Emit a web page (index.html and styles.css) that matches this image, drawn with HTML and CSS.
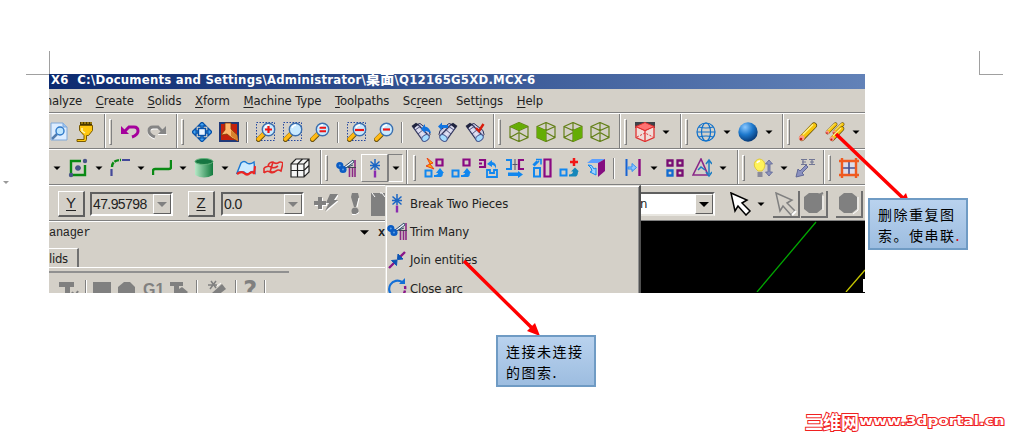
FILE: index.html
```html
<!DOCTYPE html>
<html lang="zh">
<head>
  <meta charset="UTF-8" />
  <title>Mastercam X6</title>
  <link rel="stylesheet" href="styles.css">
</head>
<body>
  <!-- shared icon shapes -->
  <svg class="defs" width="0" height="0">
    <defs>
      <linearGradient id="steel" x1="0" y1="1" x2="1" y2="0"><stop offset="0" stop-color="#5d5f8c"/><stop offset=".5" stop-color="#e4e4f6"/><stop offset="1" stop-color="#6d7099"/></linearGradient>
      <linearGradient id="green" x1="0" x2="1"><stop offset="0" stop-color="#b5e8c6"/><stop offset="1" stop-color="#117a3d"/></linearGradient>
      <radialGradient id="ball" cx=".35" cy=".25" r=".8"><stop offset="0" stop-color="#8cc8ff"/><stop offset=".5" stop-color="#1d78cc"/><stop offset="1" stop-color="#06346f"/></radialGradient>
      <symbol id="lens" viewBox="0 0 20 20">
        <path d="M2.500 17.500l5-5" stroke="#6b5310" stroke-width="5" stroke-linecap="round"/>
        <path d="M2.500 17l5-5" stroke="#ffb914" stroke-width="3.800" stroke-linecap="round"/>
        <circle cx="12.500" cy="7.500" r="6.200" fill="#c9eaff" stroke="#3c6fae" stroke-width="1.400"/>
        <path d="M9 6q1-3 4-3" stroke="#fff" stroke-width="1.500" fill="none"/>
      </symbol>
      <symbol id="dots" viewBox="0 0 20 20"><rect x=".5" y=".5" width="18" height="18" fill="none" stroke="#2548a0" stroke-dasharray="1.500 1.500"/></symbol>
      <symbol id="cube" viewBox="0 0 20 20"><path d="M1 4.500l9-4 9 4v11l-9 4-9-4zM1 4.500l9 4 9-4M10 .5v19M1 15.500l9-5 9 5" fill="none" stroke="currentColor" stroke-width="1.200"/></symbol>
      <symbol id="scope" viewBox="0 0 20 20">
        <path d="M6 2.500l3-1 9 7 1 4-3 3z" fill="url(#steel)" stroke="#30345c"/>
        <path d="M2 5l5-2.500 11 11.500q-1 5-6 5z" fill="url(#steel)" stroke="#30345c" stroke-width="1.200"/>
        <path d="M4 8l6-4M7 12l6-5" stroke="#50547c"/>
        <path d="M.5 4L5 .8l2.500 1.700L3 6.500z" fill="#20243f"/>
        <ellipse cx="14.500" cy="16" rx="4" ry="2.800" transform="rotate(-35 14.500 16)" fill="#a5dcff" stroke="#4a5b94"/>
      </symbol>
      <symbol id="drop" viewBox="0 0 8 20"><path d="M.500 8.500h7L4 12z" fill="#000"/></symbol>
      <symbol id="burst" viewBox="0 0 20 20"><path d="M10 1v11M5.500 3.500l9 8M14.500 3.500l-9 8M5 7.500h10" stroke="#1b66c4" stroke-width="1.500"/><path d="M10 12.500v7" stroke="#8a2bb0" stroke-width="2.400"/></symbol>
      <symbol id="trim" viewBox="0 0 20 20"><path d="M8 9l9-7 1 2-8 6zM9 10l8-3" fill="#eef4ff" stroke="#35506e" stroke-width="1"/><circle cx="3.800" cy="7.500" r="2.300" fill="#5c9de0" stroke="#0b5cc4" stroke-width="2.600"/><circle cx="7" cy="11.500" r="2.300" fill="#5c9de0" stroke="#0b5cc4" stroke-width="2.600"/><path d="M13.500 10v9M16.500 10v9M19 2v17" stroke="#8b2a86" stroke-width="1.600"/><path d="M12 9.500h8" stroke="#445" /></symbol>
      <symbol id="pencil" viewBox="0 0 20 20"><path d="M4 16L16 3.500" stroke="#5f4a08" stroke-width="6" stroke-linecap="round"/><path d="M4 15.500L16 3.500" stroke="#f6c40d" stroke-width="4.600" stroke-linecap="round"/><path d="M5 12.500L15 2.500" stroke="#fff08a" stroke-width="1.500"/><circle cx="3.700" cy="16" r="2.800" fill="#ff9a87"/><circle cx="3" cy="17" r="1.300" fill="#c21818"/></symbol>
    </defs>
  </svg>

  <div class="page">
    <i class="crop crop-left"></i>
    <i class="crop crop-right"></i>
    <i class="margin-mark"></i>

    <div class="app">
      <div class="titlebar">X6&nbsp; C:\Documents and Settings\Administrator\<b class="cjk">桌面</b>\Q12165G5XD.MCX-6</div>
      <div class="menubar">
        <span class="cut">nalyze</span><span><u>C</u>reate</span><span><u>S</u>olids</span><span><u>X</u>form</span><span><u>M</u>achine Type</span><span><u>T</u>oolpaths</span><span>Sc<u>r</u>een</span><span>Sett<u>i</u>ngs</span><span><u>H</u>elp</span>
      </div>

      <div class="toolbar">
        <div class="group first-a">
          <svg class="ico" viewBox="0 0 20 20"><path d="M2 1h12l4 4v13H2z" fill="#dcecff" stroke="#7fa7d8"/><path d="M14 1v4h4" fill="#9cc5f2" stroke="#7fa7d8"/><path d="M3 17l5-5" stroke="#527cae" stroke-width="2.500"/><circle cx="11" cy="9" r="4" fill="#bfe6ff" stroke="#2e78c8" stroke-width="1.400"/></svg>
          <svg class="ico" viewBox="0 0 20 20"><path d="M4 0h12v3H4z" fill="#4a3900"/><path d="M6 0v2M9 0v2M12 0v2M15 0v2" stroke="#ffce20" stroke-width=".8"/><path d="M3.500 3.500h13v5l-4 5h-2v4l-1 2H1v-2h7v-4l-4.500-5z" fill="#ffc810" stroke="#7a5a00"/><path d="M6 6v3l3 2" stroke="#fff6b0" stroke-width="1.500" fill="none"/></svg>
        </div>
        <div class="group"><i class="grip"></i>
          <svg class="ico" viewBox="0 0 20 20"><path d="M5 9l4-4h5q4 0 4 4t-6 6" fill="none" stroke="#a5009c" stroke-width="3"/><path d="M1 4v8h8z" fill="#a5009c"/></svg>
          <svg class="ico" viewBox="0 0 20 20"><path d="M16 10l-4-4H7Q2 6 2 10t6 6" fill="none" stroke="#fff" stroke-width="3"/><path d="M15 9l-4-4H6Q2 5 2 9t6 6" fill="none" stroke="#858585" stroke-width="3"/><path d="M19 4v8h-8z" fill="#858585"/><path d="M20 12.500h-9" stroke="#fff"/></svg>
        </div>
        <div class="group close"><i class="grip"></i>
          <svg class="ico" viewBox="0 0 20 20"><path d="M10 0l4 4h-3v3h-2V4H6zM10 20l4-4h-3v-3h-2v3H6zM0 10l4-4v3h3v2H4v3zM20 10l-4-4v3h-3v2h3v3z" fill="#43a5f5" stroke="#0751a8" stroke-width="1.300"/><rect x="6.500" y="6.500" width="7" height="7" fill="#e9f4ff" stroke="#0751a8" stroke-width="1.400"/></svg>
          <svg class="ico" viewBox="0 0 20 20"><rect x="1" y="1" width="18" height="18" fill="#c4200c" stroke="#203979" stroke-width="2"/><path d="M6 1h6v6l6 6 1 6-6-3-5-4-6 1 4-5z" fill="#ffb870" stroke="#8a3b00" stroke-width=".8"/><path d="M12 8l6 5 1 6-7-5z" fill="#d8812d"/></svg>
          <i class="sep"></i>
          <svg class="ico" viewBox="0 0 20 20"><use href="#dots"/><use href="#lens"/><path d="M9 7.500h7M12.500 4v7" stroke="#f01414" stroke-width="2.200"/></svg>
          <svg class="ico" viewBox="0 0 20 20"><use href="#dots"/><use href="#lens"/></svg>
          <svg class="ico" viewBox="0 0 20 20"><use href="#lens"/><path d="M9.500 5.800h6.500M9.500 9.200h6.500" stroke="#f01414" stroke-width="1.900"/></svg>
          <i class="sep"></i>
          <svg class="ico" viewBox="0 0 20 20"><use href="#dots"/><use href="#lens"/><path d="M8 8h9" stroke="#f01414" stroke-width="2.200"/></svg>
          <svg class="ico" viewBox="0 0 20 20"><use href="#lens"/><path d="M9 7.500h7" stroke="#f01414" stroke-width="2.200"/></svg>
          <i class="sep"></i>
          <svg class="ico" viewBox="0 0 20 20"><use href="#scope"/><path d="M10 7l4-5v2.500q5 1 6 7-3-3-6-2.500V11z" fill="#1274e0"/></svg>
          <svg class="ico" viewBox="0 0 20 20"><g transform="matrix(-1 0 0 1 20 0)"><use href="#scope"/></g><path d="M0 4.500l4-4v2.500h6v3H4v2.500z" fill="#1274e0"/></svg>
          <svg class="ico" viewBox="0 0 20 20"><use href="#scope"/><path d="M11 6l3 3 4.500-7" stroke="#d91c0b" stroke-width="2.400" fill="none"/></svg>
        </div>
        <div class="group olive"><i class="grip"></i>
          <svg class="ico" viewBox="0 0 20 20"><use href="#cube"/><path d="M1.500 4.500l8.500-4 8.500 4-8.500 4z" fill="#65ad05"/></svg>
          <svg class="ico" viewBox="0 0 20 20"><use href="#cube"/><path d="M1 4.500l9 4v11l-9-4z" fill="#65ad05"/></svg>
          <svg class="ico" viewBox="0 0 20 20"><use href="#cube"/><path d="M10 8.500l9-4v11l-9 4z" fill="#65ad05"/></svg>
          <svg class="ico" viewBox="0 0 20 20"><use href="#cube"/></svg>
        </div>
        <div class="group wide-end"><i class="grip"></i>
          <svg class="ico" viewBox="0 0 20 20"><path d="M0 0h20v6H0z" fill="#3e4148"/><path d="M1 4.500l9 4 9-4v11l-9 4-9-4z" fill="#f0dcd8" stroke="#e03030" stroke-width="1.300"/><path d="M1 4.500l9-4 9 4-9 4z" fill="#ff7272" stroke="#e03030"/><path d="M10 8.500v11" stroke="#e03030" stroke-width="1.300"/><path d="M2 15l8-4 8 4" fill="none" stroke="#e03030" stroke-dasharray="2 1.500"/></svg>
          <svg class="drop"><use href="#drop"/></svg>
        </div>
        <div class="group"><i class="grip"></i>
          <svg class="ico" viewBox="0 0 20 20"><g fill="none" stroke="#0e70cb" stroke-width="1.200"><circle cx="10" cy="10" r="9"/><ellipse cx="10" cy="10" rx="4.500" ry="9"/><path d="M1 10h18M3 5q7 2 14 0M3 15q7-2 14 0"/></g></svg>
          <svg class="drop"><use href="#drop"/></svg>
          <svg class="ico" viewBox="0 0 20 20"><circle cx="10" cy="10" r="9.700" fill="url(#ball)"/></svg>
          <svg class="drop"><use href="#drop"/></svg>
        </div>
        <div class="group last"><i class="grip"></i>
          <svg class="ico" viewBox="0 0 20 20"><use href="#pencil"/></svg>
          <svg class="ico" viewBox="0 0 20 20"><use href="#pencil" x="0" y="0" width="13" height="13"/><use href="#pencil" x="7" y="0" width="13" height="13"/><use href="#pencil" x="4" y="4" width="16" height="16"/></svg>
          <svg class="drop"><use href="#drop"/></svg>
        </div>
      </div>

      <div class="toolbar">
        <div class="group first-b">
          <svg class="drop"><use href="#drop"/></svg>
          <svg class="ico" viewBox="0 0 20 20"><path d="M13 3H3v14h14V7" fill="none" stroke="#0a8a14" stroke-width="2.400"/><path d="M7 10h6" stroke="#345"/><g fill="#495488"><circle cx="17" cy="3" r="2.200"/><circle cx="10" cy="10" r="2.700"/><circle cx="3" cy="17" r="2.200"/></g></svg>
          <svg class="drop"><use href="#drop"/></svg>
          <svg class="ico" viewBox="0 0 20 20"><path d="M2 9q0-7 9-7" fill="none" stroke="#0a8a14" stroke-width="2.400" stroke-dasharray="5 1"/><path d="M1.500 11v7M12 2h8" stroke="#44499a" stroke-width="2.200"/></svg>
          <svg class="drop"><use href="#drop"/></svg>
          <svg class="ico" viewBox="0 0 20 20"><path d="M1 17v-4q0-2 2-2h14q2 0 2-2V2" fill="none" stroke="#0a8a14" stroke-width="2.400"/></svg>
          <svg class="drop"><use href="#drop"/></svg>
          <svg class="ico" viewBox="0 0 20 20"><path d="M1 3v14q9 5 18 0V3z" fill="url(#green)"/><ellipse cx="10" cy="3.500" rx="9" ry="3" fill="#167642" stroke="#65b47d"/></svg>
          <svg class="drop"><use href="#drop"/></svg>
          <svg class="ico" viewBox="0 0 20 20"><path d="M1 15L5 5q3-3 6 0 3 2 7-1l1 11q-3-3-5 0-3 2-6-1-3-1-7 1z" fill="#cceaff" stroke="#1b78d2" stroke-width="1.400"/><path d="M1 16q4-3 7-1 3 3 6 0 3-2 4 1l1-8" stroke="#ee2522" stroke-width="2.200" fill="none"/></svg>
          <svg class="ico" viewBox="0 0 20 20"><path d="M5 8q1-4 5-4 2 2 5 1 2-2 5 0l-2 8q-3-2-5 0-4 2-6 0M1 10q4-3 7-1 3 2 7-1M1 15q3-3 6-1 3 2 6-1M10 4L7 14M1 10v5" fill="none" stroke="#e42b29" stroke-width="1.600"/></svg>
          <svg class="ico" viewBox="0 0 20 20"><path d="M1 6l5-5h13v13l-5 5H1z" fill="#f5f5f5"/><path d="M1 6l5-5h13v13l-5 5H1zM1 6h13v13M14 6l5-5M7.500 19V6l5-5M1 12.500h13l5-5" fill="none" stroke="#222" stroke-width="1.200"/></svg>
        </div>
        <div class="group tight"><i class="grip"></i>
          <svg class="ico" viewBox="0 0 20 20"><use href="#trim"/></svg>
          <div class="split"><span class="split-main"><svg class="ico" viewBox="0 0 20 20"><use href="#burst"/></svg></span><span class="split-drop"><svg class="drop"><use href="#drop"/></svg></span></div>
        </div>
        <div class="group modify"><i class="grip"></i>
          <svg class="ico" viewBox="0 0 20 20"><path d="M12.500 1.500h6v6h-6z" fill="none" stroke="#8a0982" stroke-width="2.200"/><path d="M1.500 12.500h6v6h-6z" fill="none" stroke="#1187ef" stroke-width="2"/><path d="M10 19h7q2-1 2-4h1l-4-5-4 5h2q0 2-4 2z" fill="#1187ef"/><path d="M3 0l6 5-3 1 4 5-8-3 4-2z" fill="#ffb000" stroke="#ef4112"/></svg>
          <svg class="ico" viewBox="0 0 20 20"><path d="M12.500 1.500h6v6h-6z" fill="none" stroke="#8a0982" stroke-width="2.200"/><path d="M1.500 12.500h6v6h-6z" fill="none" stroke="#1187ef" stroke-width="2"/><path d="M10 19h7q2-1 2-4h1l-4-5-4 5h2q0 2-4 2z" fill="#1187ef"/></svg>
          <svg class="ico" viewBox="0 0 20 20"><path d="M1 2h6v7H1M1 5.500h3" fill="none" stroke="#8a0982" stroke-width="2.200"/><path d="M9 12h3v3h4v-3h3v7H9z" fill="none" stroke="#1187ef" stroke-width="1.800"/><path d="M9 6l5-4v2q5 1 4 7-1-4-4-4v2z" fill="#1187ef"/></svg>
          <svg class="ico" viewBox="0 0 20 20"><path d="M1 2h5v9H1" fill="none" stroke="#1187ef" stroke-width="2"/><path d="M19 2h-5v9h5" fill="none" stroke="#8a0982" stroke-width="2.200"/><path d="M10 1v11M7.500 6.500h5" stroke="#556"/><path d="M3 14.500h10v-1.500l5 3.500-5 3.500V18H3z" fill="#1187ef"/></svg>
          <svg class="ico" viewBox="0 0 20 20"><path d="M12.500 1.500h6v17h-6z" fill="none" stroke="#8a0982" stroke-width="2.200"/><path d="M2 10h6v8.500H2z" fill="none" stroke="#1187ef" stroke-width="2"/><path d="M1 7l4-4M4 1.500h5v5M2 8l5-5" fill="none" stroke="#1187ef" stroke-width="1.600"/></svg>
          <svg class="ico" viewBox="0 0 20 20"><path d="M1.500 11.500h6v6h-6z" fill="none" stroke="#1187ef" stroke-width="2"/><path d="M10 18.500h7q2-1 2-5h1l-4-4-4 4h2q0 3-4 3z" fill="#1687ba"/><path d="M11 4h8M15 0v8" stroke="#f11616" stroke-width="2.500"/></svg>
          <svg class="ico" viewBox="0 0 20 20"><path d="M1 5l5-4h13l-7 4z" fill="#5c9fff"/><path d="M12 5l7-4v12l-7 6z" fill="#850d80"/><path d="M2 7q4-1 6 4l2-1v7l-6-3 2-1q0-3-4-6z" fill="#9cd2ff" stroke="#1187ef"/></svg>
          <i class="sep"></i>
          <svg class="ico" viewBox="0 0 20 20"><path d="M3.500 1v17" stroke="#1763d2" stroke-width="2"/><path d="M16.500 1v17" stroke="#8a0982" stroke-width="2.400"/><path d="M5 9h4V5.500l4.500 4-4.500 4V11H5z" fill="#8cc4ff" stroke="#338ff2"/></svg>
          <svg class="drop"><use href="#drop"/></svg>
          <svg class="ico" viewBox="0 0 20 20"><g fill="none" stroke-width="2.300"><path d="M2.500 2.500h5v5h-5zM12.500 2.500h5v5h-5zM12.500 12.500h5v5h-5z" stroke="#780d73"/><path d="M2.500 12.500h5v5h-5z" stroke="#126bd0"/></g></svg>
          <svg class="ico" viewBox="0 0 20 20"><path d="M1 17L9 1l7 16z" fill="none" stroke="#8a2788" stroke-width="1.600"/><path d="M6 12l3-3 4 3M17 3v13M14 6l3-4 3 4M14 14l3 4 3-4" fill="none" stroke="#1b7dc4" stroke-width="1.500"/></svg>
          <svg class="drop"><use href="#drop"/></svg>
        </div>
        <div class="group close"><i class="grip"></i>
          <svg class="ico" viewBox="0 0 20 20"><path d="M5 13Q-1 8 2.500 3q4-4 8 0 3.500 5-1.500 10z" fill="#fff35a" stroke="#e0c83a"/><path d="M4.500 14h5v5h-5z" fill="#8a8a9a"/><path d="M4 5q1-2 3-2" stroke="#fff" stroke-width="1.600" fill="none"/><path d="M16 2l3.500 4H17v8h2.500L16 18l-3.500-4H15V6h-2.500z" fill="#8d93bb" stroke="#5d6598" stroke-width=".8"/></svg>
          <svg class="drop"><use href="#drop"/></svg>
          <svg class="ico" viewBox="0 0 20 20"><path d="M6 1.500h6M14 1.500h6M6 6.500h6M14 6.500h6M7 4h4M15 4h4M8 2v4M17 2v4" stroke="#717695" stroke-width="1.200" fill="none"/><path d="M11 7l-6 6-2-2-2 8 8-2-2-2 6-6z" fill="#8b91c0" stroke="#626996"/></svg>
        </div>
        <div class="group last"><i class="grip"></i>
          <svg class="ico" viewBox="0 0 20 20"><path d="M3 3h14v14H3z" fill="#dcdbe9"/><path d="M10 4v12M4 10h12" stroke="#455090" stroke-width="1.600"/><path d="M3 0v20M17 0v20M0 3h20M0 17h20" stroke="#ef5a20" stroke-width="2.400"/></svg>
        </div>
      </div>

      <div class="ribbon">
        <div class="coords">
          <span class="key"><u>Y</u></span>
          <span class="field">47.95798<i class="spin off"></i></span>
          <span class="key key-z"><u>Z</u></span>
          <span class="field field-z">0.0<i class="spin off"></i></span>
          <svg class="bolt" viewBox="0 0 24 24"><g transform="translate(1 1)" fill="#fff"><path d="M0 9h4V5h4v4h4v4H8v4H4v-4H0zM16 2h8l-4 6h4L11 19l4-8h-3z"/></g><path d="M0 9h4V5h4v4h4v4H8v4H4v-4H0zM16 2h8l-4 6h4L11 19l4-8h-3z" fill="#808080"/></svg>
          <svg class="bang" viewBox="0 0 10 24"><path d="M2 1h6l1 4-3 10H4L1 5z" fill="#808080"/><circle cx="5" cy="19" r="3.500" fill="#808080"/><path d="M9 6L7 15M2 22.500q4 1 7-2" stroke="#fff" fill="none"/></svg>
          <svg class="card" viewBox="0 0 14 24"><path d="M0 1h14v23H0z" fill="#808080"/><path d="M1 1l3 4M9 1h2l3 4" stroke="#fff" fill="none"/></svg>
        </div>
        <div class="selection">
          <span class="combo">n<i class="spin"></i></span>
          <svg class="cursor" viewBox="0 0 24 24"><path d="M2 1l16 7-5 3 8 8-4 4-8-9-3 5z" fill="#fff" stroke="#000" stroke-width="1.500"/></svg>
          <svg class="drop"><use href="#drop"/></svg>
          <span class="press"><svg viewBox="0 0 24 24"><path d="M2 1l16 7-5 3 8 8-4 4-8-9-3 5z" fill="#d4d0c8" stroke="#808080" stroke-width="1.500"/><path d="M18 23l4-4" stroke="#fff" stroke-width="2"/></svg></span>
          <span class="press"><svg viewBox="0 0 24 24"><path d="M2 5l5-4h9l4 2v14l-5 4H7l-5-4z" fill="#808080"/><path d="M15 4l6-3" stroke="#808080" stroke-width="2"/><path d="M21 4v14" stroke="#fff"/></svg></span>
          <span class="press press-last"><svg viewBox="0 0 24 24"><path d="M2 5l5-4h8l5 4v12l-5 4H7l-5-4z" fill="#808080"/><path d="M21 5v13l-5 4" stroke="#fff" fill="none"/></svg></span>
        </div>
      </div>

      <div class="workspace">
        <div class="manager">
          <div class="manager-head"><span>anager</span><svg class="head-arrow" viewBox="0 0 10 6"><path d="M0 0h10L5 5z"/></svg><b>x</b></div>
          <div class="tabs"><span class="tab">lids</span></div>
          <div class="tab-line"></div>
          <div class="manager-tools">
            <svg class="mt" viewBox="0 0 22 16"><path d="M1 2h15v5h-4v9H7V7H1z" fill="#808080"/><path d="M14 12l3 4 3-5" stroke="#808080" stroke-width="2" fill="none"/></svg>
            <i class="sep"></i>
            <i class="block"></i>
            <svg class="mt" viewBox="0 0 22 16"><path d="M2 7l6-5h6l5 5v9H2z" fill="#808080"/></svg>
            <b class="g1">G1</b>
            <svg class="mt" viewBox="0 0 22 16"><path d="M1 2h13v4h-4l0 3 3-2 6 5-4 4H5V6H1z" fill="#808080"/></svg>
            <i class="sep"></i>
            <svg class="mt mt-wide" viewBox="0 0 22 16"><path d="M2 5h9M5 1l5 7M10 1L4 9" stroke="#808080" stroke-width="1.500" fill="none"/><path d="M6 13l10-9 4 5-9 7H7z" fill="#808080"/><path d="M11 6l4-3" stroke="#fff"/></svg>
            <i class="sep"></i>
            <b class="help">?</b>
            <i class="sep"></i>
          </div>
        </div>
        <div class="viewport">
          <svg viewBox="0 0 225 71"><path d="M117 71L176 1" stroke="#00a800" stroke-width="1.300"/><path d="M206 71l19-22" stroke="#c8c800" stroke-width="1.300"/><path d="M223 58h2v13h-2z" fill="#fff"/></svg>
        </div>
      </div>

      <div class="dropdown">
        <div class="entry"><svg class="ico" viewBox="0 0 20 20"><use href="#burst"/></svg>Break Two Pieces</div>
        <div class="entry"><svg class="ico" viewBox="0 0 20 20"><use href="#trim"/></svg>Trim Many</div>
        <div class="entry"><svg class="ico" viewBox="0 0 20 20"><path d="M2 18l6-6M12 8l6-6" stroke="#8a168a" stroke-width="2.400"/><path d="M4.500 10.500l5.500-.5-.5 5.500-1.800-2zM10.500 9.500l.5-5.500 1.800 2 3.200 3z" fill="#0c54b4" stroke="#0c54b4"/></svg>Join entities</div>
        <div class="entry"><svg class="ico" viewBox="0 0 20 20"><path d="M6 18A8 8 0 1 1 15 4" fill="none" stroke="#136fd6" stroke-width="2.200"/><path d="M12 6h6V0z" fill="#136fd6"/><path d="M18 8q1 6-3 10" fill="none" stroke="#8a168a" stroke-width="2.400" stroke-dasharray="3 1.500"/></svg>Close arc</div>
      </div>
    </div>

    <svg class="pointers" viewBox="0 0 1025 435">
      <path d="M836 134l69 66M464 261l69 68" stroke="#f00" stroke-width="3.500"/>
      <path d="M540 336l-13-5 8-8zM909 202l-10-1 7-8z" fill="#f00"/>
    </svg>
    <div class="callout callout-delete">删除重复图<br>索。使串联<em>.</em></div>
    <div class="callout callout-join">连接未连接<br>的图索.</div>
    <div class="watermark"><span>三维网</span><span class="url">www.3dportal.cn</span></div>
  </div>
</body>
</html>
```

FILE: styles.css
```css
* {
  box-sizing: border-box;
}

body {
  margin: 0;
  background: #fff;
  font-family: "DejaVu Sans Condensed", "DejaVu Sans", "Noto Sans CJK SC", sans-serif;
  font-size: 13px;
  color: #222;
}

.defs {
  position: absolute;
}

.page {
  position: relative;
  width: 1025px;
  height: 435px;
  padding: 74px 0 0 49px;
  overflow: hidden;
}

/* page corner marks */
.crop {
  position: absolute;
  top: 51px;
  width: 24px;
  height: 24px;
  border-bottom: 1px solid #a0a0a0;
}

.crop-left {
  left: 26px;
  border-right: 1px solid #a0a0a0;
}

.crop-right {
  left: 979px;
  border-left: 1px solid #a0a0a0;
}

.margin-mark {
  position: absolute;
  left: 3px;
  top: 181px;
  border: 3px solid transparent;
  border-top-color: #999;
}

.app {
  position: relative;
  width: 816px;
  height: 219px;
  overflow: hidden;
  background: #d4d0c8;
}

.titlebar {
  height: 15px;
  overflow: hidden;
  background: linear-gradient(90deg, #0c2a70, #6282b8);
  color: #fff;
  font-size: 13px;
  font-weight: bold;
  line-height: 9px;
  padding-left: 2px;
  white-space: nowrap;
  letter-spacing: 0.23px;
}

.cjk {
  font-family: "Noto Sans CJK SC", sans-serif;
  font-size: 14px;
  line-height: 9px;
}

.menubar {
  display: flex;
  gap: 13.7px;
  height: 24px;
  line-height: 24px;
  letter-spacing: -0.12px;
  border-bottom: 1px solid #808080;
}

.menubar span {
  white-space: nowrap;
}

.cut {
  display: flex;
  justify-content: flex-end;
  width: 33px;
  overflow: hidden;
}

u {
  text-underline-offset: 2px;
}

/* toolbars */
.toolbar {
  display: flex;
  height: 36px;
  border-top: 1px solid #fff;
  border-bottom: 1px solid #808080;
}

.group {
  display: flex;
  align-items: center;
  gap: 7px;
  padding: 2px 9px 0 0;
  border-right: 1px solid #808080;
  box-shadow: 1px 0 #fff;
  flex: none;
}

.close {
  padding-right: 8px;
}

.first-a {
  width: 56px;
}

.first-b {
  padding-left: 4px;
  padding-right: 10px;
}

.tight {
  padding-right: 3px;
}

.wide-end {
  padding-right: 10px;
}

.modify {
  padding-left: 2px;
  padding-right: 10px;
}

.olive {
  color: #638018;
}

.last {
  border-right: 0;
  box-shadow: none;
}

.grip {
  width: 3px;
  height: 26px;
  margin: 0 1px 0 4px;
  border: 1px solid #fff;
  border-right-color: #808080;
  border-bottom-color: #808080;
}

.sep {
  width: 3px;
  height: 21px;
  border-left: 1px solid #808080;
  box-shadow: inset 1px 0 #fff;
}

.ico {
  display: block;
  width: 20px;
  height: 20px;
  flex: none;
}

.drop {
  width: 8px;
  height: 20px;
  flex: none;
}

.split {
  display: flex;
  height: 28px;
  margin-left: -2px;
}

.split-main,
.split-drop {
  display: flex;
  align-items: center;
  justify-content: center;
  width: 27px;
  border: 1px solid #fff;
  border-right-color: #808080;
  border-bottom-color: #808080;
}

.split-drop {
  width: 15px;
  border-color: #808080 #fff #fff #808080;
}

/* coordinate ribbon */
.ribbon {
  display: flex;
  height: 36px;
  border-top: 1px solid #fff;
  border-bottom: 1px solid #808080;
}

.coords {
  display: flex;
  align-items: center;
  width: 336px;
  padding: 2px 0 0 9px;
  overflow: hidden;
}

.key {
  width: 27px;
  height: 26px;
  flex: none;
  border: 1px solid #fff;
  border-right: 2px solid #606060;
  border-bottom: 2px solid #606060;
  text-align: center;
  font-family: "Liberation Sans", sans-serif;
  font-size: 15px;
  line-height: 22px;
}

.key-z {
  margin-left: 15px;
}

.field {
  display: flex;
  justify-content: space-between;
  flex: none;
  width: 83px;
  height: 24px;
  margin-left: 5px;
  padding-left: 1px;
  border: 2px solid #606060;
  border-right-color: #fff;
  border-bottom-color: #fff;
  font-family: "Liberation Sans", sans-serif;
  font-size: 14px;
  letter-spacing: -0.6px;
  line-height: 20px;
}

.field-z {
  margin-left: 6px;
}

.spin {
  display: flex;
  align-items: center;
  justify-content: center;
  width: 18px;
  background: #d4d0c8;
  border: 1px solid #fff;
  border-right-color: #606060;
  border-bottom-color: #606060;
}

.spin::after {
  content: "";
  border: 5px solid transparent;
  border-top-color: #000;
  border-bottom: 0;
}

.off::after {
  border-top-color: #808080;
}

.bolt {
  width: 24px;
  height: 24px;
  margin-left: 10px;
  flex: none;
}

.bang {
  width: 10px;
  height: 24px;
  margin-left: 12px;
  flex: none;
}

.card {
  width: 14px;
  height: 24px;
  margin-left: 11px;
  flex: none;
}

.selection {
  display: flex;
  align-items: center;
  flex: none;
  width: 225px;
  margin-left: 255px;
  padding-top: 2px;
  overflow: hidden;
}

.combo {
  display: flex;
  justify-content: space-between;
  flex: none;
  width: 75px;
  height: 24px;
  border-top: 2px solid #606060;
  border-right: 2px solid #fff;
  border-bottom: 2px solid #e8e6e0;
  background: #fff;
  line-height: 20px;
}

.cursor {
  width: 24px;
  height: 24px;
  margin: 0 4px 0 14px;
  flex: none;
}

.press {
  width: 27px;
  height: 27px;
  margin-left: 1px;
  padding: 1px;
  flex: none;
  border-right: 2px solid #707070;
  border-bottom: 2px solid #707070;
}

.press svg {
  display: block;
  width: 24px;
  height: 24px;
}

.drop + .press {
  margin-left: 8px;
}

.press-last {
  margin-left: 8px;
}

/* manager panel and graphics view */
.workspace {
  display: flex;
  height: 72px;
}

.manager {
  width: 336px;
  border-top: 1px solid #fff;
}

.manager-head {
  display: flex;
  align-items: center;
  height: 21px;
  font: bold 12px "Liberation Mono", monospace;
  letter-spacing: -0.3px;
}

.manager-head span {
  font-weight: normal;
}

.head-arrow {
  width: 9px;
  height: 6px;
  margin: 0 9px 0 auto;
}

.tabs {
  display: flex;
  height: 25px;
  padding-top: 5px;
  border-bottom: 1px solid #fff;
}

.tab {
  width: 30px;
  border-top: 1px solid #fff;
  border-right: 2px solid #707070;
  line-height: 20px;
  letter-spacing: -0.3px;
}

.tab-line {
  width: 240px;
  height: 5px;
  border-bottom: 2px solid #909090;
}

.manager-tools {
  display: flex;
  align-items: flex-start;
  gap: 5px;
  padding: 7px 0 0 9px;
  color: #808080;
}

.mt {
  width: 22px;
  height: 16px;
  flex: none;
}

.mt-wide {
  margin: 0 2px;
}

.block {
  width: 18px;
  height: 16px;
  margin-top: 2px;
  background: #808080;
}

.g1 {
  font: bold 16px/20px "Liberation Sans", sans-serif;
}

.help {
  width: 16px;
  font: bold 24px/21px "DejaVu Sans", sans-serif;
}

.viewport {
  width: 225px;
  margin-left: 255px;
  background: #000;
}

.viewport svg {
  display: block;
  width: 225px;
  height: 71px;
}

/* open tool menu */
.dropdown {
  position: absolute;
  left: 336px;
  top: 111px;
  width: 256px;
  height: 120px;
  padding: 3px 1px;
  background: #d4d0c8;
  border: 1px solid #e4e2dc;
  border-right: 2px solid #505050;
  box-shadow: inset 1px 1px #fff, inset -1px 0 #909090;
}

.entry {
  display: flex;
  align-items: center;
  gap: 3px;
  height: 28.3px;
  letter-spacing: -0.1px;
}

/* notes over the page */
.pointers {
  position: absolute;
  left: 0;
  top: 0;
  width: 1025px;
  height: 435px;
  fill: none;
}

.callout {
  position: absolute;
  width: 100px;
  height: 52px;
  padding: 4px 8px;
  border: 2px solid #6f9bc4;
  background: linear-gradient(#b9d2ee, #9dbde0);
  font-family: "Noto Sans CJK SC", sans-serif;
  font-size: 14px;
  letter-spacing: 1.5px;
  line-height: 21px;
  color: #000;
  white-space: nowrap;
}

.callout em {
  color: #d00;
  font-style: normal;
  letter-spacing: 0;
}

.callout-delete {
  left: 868px;
  top: 198px;
}

.callout-join {
  left: 496px;
  top: 335px;
}

.watermark {
  position: absolute;
  left: 805px;
  top: 409px;
  display: flex;
  align-items: center;
  height: 24px;
  color: #fff;
  font: bold 18px/24px "Noto Sans CJK SC", sans-serif;
  -webkit-text-stroke: 2px #f02020;
  paint-order: stroke fill;
}

.url {
  font: bold 13px/24px "DejaVu Sans", sans-serif;
  transform: scaleX(1.17);
  transform-origin: left;
}
```
